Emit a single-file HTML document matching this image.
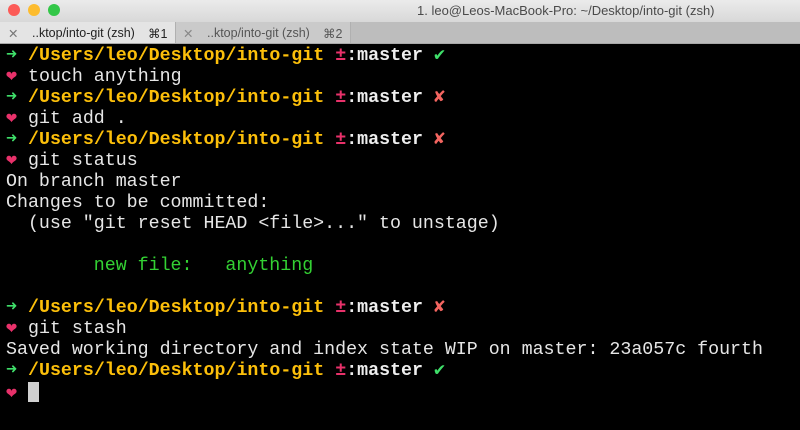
<!DOCTYPE html>
<html><head><style>
body{margin:0;width:800px;height:430px;overflow:hidden;background:#000;font-family:"Liberation Sans",sans-serif}
#title{position:absolute;left:0;top:0;width:800px;height:22px;background:linear-gradient(#ebebeb,#d8d8d8);}
.dot{position:absolute;top:4px;width:12px;height:12px;border-radius:50%}
#ttl{position:absolute;left:417px;top:3px;font-size:13px;color:#4a4a4a}
#tabs{position:absolute;left:0;top:22px;width:800px;height:22px;background:#bdbdbd;border-bottom:1px solid #a8a8a8;box-sizing:border-box}
.tab{position:absolute;top:0;height:21px;font-size:12.5px;color:#222}
.tab span{position:absolute;top:4px}
#term{position:absolute;left:6px;top:46px;font-family:"Liberation Mono",monospace;font-size:18.3px;line-height:21px;color:#e6e6e6;white-space:pre}
.g{color:#3fe06a}.y{color:#fcbf0a;font-weight:bold}.p{color:#e8316a;font-weight:bold}.w{font-weight:bold;color:#eee}.r{color:#f36560}.n{color:#33d133}
.cur{display:inline-block;width:11px;height:20px;background:#d0d0d0;vertical-align:-4px}
</style></head><body>
<div id="title">
<div class="dot" style="left:8px;background:#fc5b57"></div>
<div class="dot" style="left:28px;background:#fdbc2e"></div>
<div class="dot" style="left:48px;background:#33c748"></div>
<div id="ttl">1. leo@Leos-MacBook-Pro: ~/Desktop/into-git (zsh)</div>
</div>
<div id="tabs">
<div class="tab" style="left:0;width:175px;background:#e4e4e4;border-right:1px solid #b0b0b0"><span style="left:8px;color:#777">✕</span><span style="left:32px">..ktop/into-git (zsh)</span><span style="left:148px">⌘1</span></div>
<div class="tab" style="left:176px;width:174px;background:#cacaca;border-right:1px solid #b0b0b0;color:#555"><span style="left:7px;color:#888">✕</span><span style="left:31px;color:#555">..ktop/into-git (zsh)</span><span style="left:147px;color:#555">⌘2</span></div>
</div>
<div id="term"><span class="g">➜</span> <span class="y">/Users/leo/Desktop/into-git</span> <span class="p">±</span><span class="w">:master</span> <span class="g">✔</span>
<span class="p">❤</span> touch anything
<span class="g">➜</span> <span class="y">/Users/leo/Desktop/into-git</span> <span class="p">±</span><span class="w">:master</span> <span class="r">✘</span>
<span class="p">❤</span> git add .
<span class="g">➜</span> <span class="y">/Users/leo/Desktop/into-git</span> <span class="p">±</span><span class="w">:master</span> <span class="r">✘</span>
<span class="p">❤</span> git status
On branch master
Changes to be committed:
  (use "git reset HEAD &lt;file&gt;..." to unstage)

        <span class="n">new file:   anything</span>

<span class="g">➜</span> <span class="y">/Users/leo/Desktop/into-git</span> <span class="p">±</span><span class="w">:master</span> <span class="r">✘</span>
<span class="p">❤</span> git stash
Saved working directory and index state WIP on master: 23a057c fourth
<span class="g">➜</span> <span class="y">/Users/leo/Desktop/into-git</span> <span class="p">±</span><span class="w">:master</span> <span class="g">✔</span>
<span class="p">❤</span> <span class="cur"></span></div>
</body></html>
